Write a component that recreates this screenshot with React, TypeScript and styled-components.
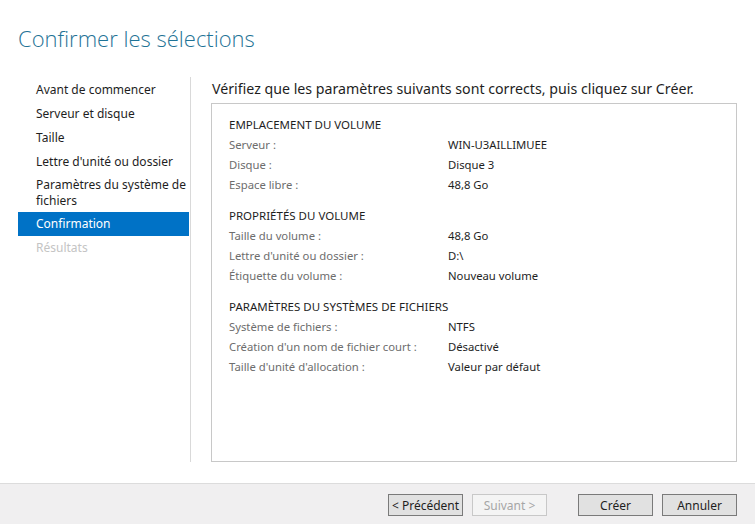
import styled, { createGlobalStyle } from "styled-components";

const GlobalStyle = createGlobalStyle`
  html, body {
    margin: 0;
    padding: 0;
    background: #ffffff;
  }
  body {
    font-family: "Noto Sans", "Open Sans", sans-serif;
    color: #1e1e1e;
  }
  * {
    box-sizing: border-box;
  }
`;

const Page = styled.div`
  display: flex;
  flex-flow: column;
  width: 755px;
  height: 524px;
  overflow: hidden;
`;

const Header = styled.div`
  height: 77px;
  padding: 22px 0 0 18px;
`;

const Title = styled.h1`
  margin: 0;
  font-family: "Open Sans", "Noto Sans", sans-serif;
  font-weight: 300;
  font-size: 22px;
  line-height: 32px;
  color: #1f7396;
`;

const Main = styled.div`
  display: flex;
  flex-flow: row;
  flex: 1;
  padding-bottom: 21px;
`;

const Nav = styled.ul`
  width: 191px;
  margin: 0;
  padding: 1px 1px 0 18px;
  list-style: none;
  border-right: 1px solid #d9d9d9;
`;

const NavItem = styled.li<{ $active?: boolean; $disabled?: boolean; $wrap?: boolean }>`
  padding: ${(p) => (p.$wrap ? "3px 0 3px 18px" : "4px 0 4px 18px")};
  font-size: 12px;
  line-height: 16px;
  background: ${(p) => (p.$active ? "#0072c6" : "transparent")};
  color: ${(p) => (p.$active ? "#ffffff" : p.$disabled ? "#c4c4c4" : "#1e1e1e")};
`;

const Content = styled.div`
  display: flex;
  flex-flow: column;
  flex: 1;
  padding: 0 18px 0 20px;
`;

const Lead = styled.div`
  font-size: 14.2px;
  line-height: 24px;
  padding-left: 1px;
  margin-bottom: 2px;
  color: #1e1e1e;
`;

const Box = styled.div`
  flex: 1;
  border: 1px solid #c8c8c8;
  padding: 11px 17px 10px;
`;

const Section = styled.div`
  margin-bottom: 11px;
`;

const SectionTitle = styled.div`
  font-size: 11.5px;
  line-height: 20px;
  color: #1e1e1e;
`;

const Row = styled.div`
  display: grid;
  grid-template-columns: 219px 1fr;
  font-size: 11.3px;
  line-height: 20px;
`;

const Label = styled.span`
  color: #6d6d6d;
`;

const Value = styled.span`
  color: #1e1e1e;
`;

const Footer = styled.div`
  display: flex;
  flex-flow: row;
  justify-content: flex-end;
  align-items: flex-start;
  height: 41px;
  padding: 10px 18px 0 0;
  background: #f0eff0;
  border-top: 1px solid #dcdcdc;
`;

const Button = styled.button<{ $gap?: number }>`
  width: 75px;
  height: 22px;
  margin-left: ${(p) => p.$gap ?? 9}px;
  padding: 0;
  font-family: "Noto Sans", "Open Sans", sans-serif;
  font-size: 12px;
  color: #1e1e1e;
  background: #e1e1e1;
  border: 1px solid #7a7a7a;

  &:disabled {
    color: #a6a6a6;
    background: #f4f4f4;
    border-color: #c8c8c8;
  }
`;

const sections = [
  {
    title: "EMPLACEMENT DU VOLUME",
    rows: [
      ["Serveur :", "WIN-U3AILLIMUEE"],
      ["Disque :", "Disque 3"],
      ["Espace libre :", "48,8 Go"],
    ],
  },
  {
    title: "PROPRIÉTÉS DU VOLUME",
    rows: [
      ["Taille du volume :", "48,8 Go"],
      ["Lettre d'unité ou dossier :", "D:\\"],
      ["Étiquette du volume :", "Nouveau volume"],
    ],
  },
  {
    title: "PARAMÈTRES DU SYSTÈMES DE FICHIERS",
    rows: [
      ["Système de fichiers :", "NTFS"],
      ["Création d'un nom de fichier court :", "Désactivé"],
      ["Taille d'unité d'allocation :", "Valeur par défaut"],
    ],
  },
];

export default function App() {
  return (
    <>
      <GlobalStyle />
      <Page>
        <Header>
          <Title>Confirmer les sélections</Title>
        </Header>
        <Main>
          <Nav>
            <NavItem>Avant de commencer</NavItem>
            <NavItem>Serveur et disque</NavItem>
            <NavItem>Taille</NavItem>
            <NavItem>Lettre d'unité ou dossier</NavItem>
            <NavItem $wrap>Paramètres du système de fichiers</NavItem>
            <NavItem $active>Confirmation</NavItem>
            <NavItem $disabled>Résultats</NavItem>
          </Nav>
          <Content>
            <Lead>Vérifiez que les paramètres suivants sont corrects, puis cliquez sur Créer.</Lead>
            <Box>
              {sections.map((s) => (
                <Section key={s.title}>
                  <SectionTitle>{s.title}</SectionTitle>
                  {s.rows.map(([label, value]) => (
                    <Row key={label}>
                      <Label>{label}</Label>
                      <Value>{value}</Value>
                    </Row>
                  ))}
                </Section>
              ))}
            </Box>
          </Content>
        </Main>
        <Footer>
          <Button>&lt; Précédent</Button>
          <Button disabled>Suivant &gt;</Button>
          <Button $gap={31}>Créer</Button>
          <Button>Annuler</Button>
        </Footer>
      </Page>
    </>
  );
}
